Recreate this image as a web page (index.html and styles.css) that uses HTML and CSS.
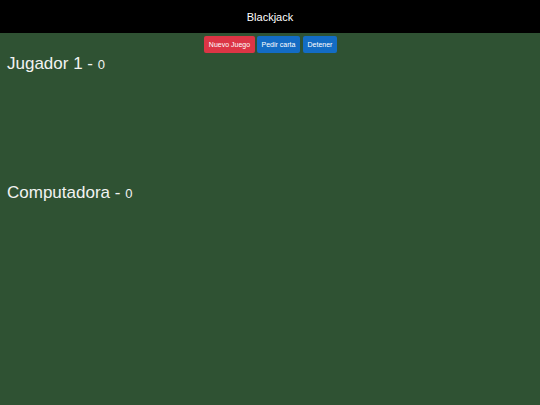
FILE: index.html
```html
<!DOCTYPE html>
<html>
<head>
<meta charset="utf-8">
<link rel="stylesheet" href="styles.css">
</head>
<body>
<header class="topbar"><h1 class="title">Blackjack</h1></header>
<div class="controls">
  <button class="btn btn-red">Nuevo Juego</button>
  <button class="btn btn-blue btn-pedir">Pedir carta</button>
  <button class="btn btn-blue btn-detener">Detener</button>
</div>
<section class="player">
  <h2 class="name">Jugador 1 - <small class="score">0</small></h2>
  <div class="cards"></div>
</section>
<section class="player">
  <h2 class="name">Computadora - <small class="score">0</small></h2>
  <div class="cards"></div>
</section>
</body>
</html>
```
FILE: styles.css
```css
html, body {
  margin: 0;
  padding: 0;
}
body {
  background: #2f5233;
  font-family: "Liberation Sans", Arial, sans-serif;
  color: #f2f2f2;
  height: 405px;
}
.topbar {
  background: #000;
  height: 33px;
  display: flex;
  align-items: center;
  justify-content: center;
}
.title {
  margin: 0;
  font-size: 11px;
  font-weight: normal;
  color: #fff;
}
.controls {
  display: flex;
  justify-content: center;
  gap: 2px;
  padding-top: 3px;
  padding-left: 1px;
}
.btn {
  font-family: "Liberation Sans", Arial, sans-serif;
  font-size: 7px;
  height: 17px;
  border: none;
  border-radius: 2px;
  color: #fff;
  padding: 0;
  margin: 0;
  white-space: nowrap;
}
.btn-red { background: #dc3545; width: 51px; }
.btn-blue { background: #136cc4; }
.btn-pedir { width: 43px; }
.btn-detener { width: 34px; margin-left: 1px; }
.player {
  padding-left: 7px;
}
.name {
  margin: 0;
  font-size: 17px;
  font-weight: normal;
  line-height: 22px;
}
.score {
  font-size: 13px;
}
.cards {
  height: 106px;
}
```
